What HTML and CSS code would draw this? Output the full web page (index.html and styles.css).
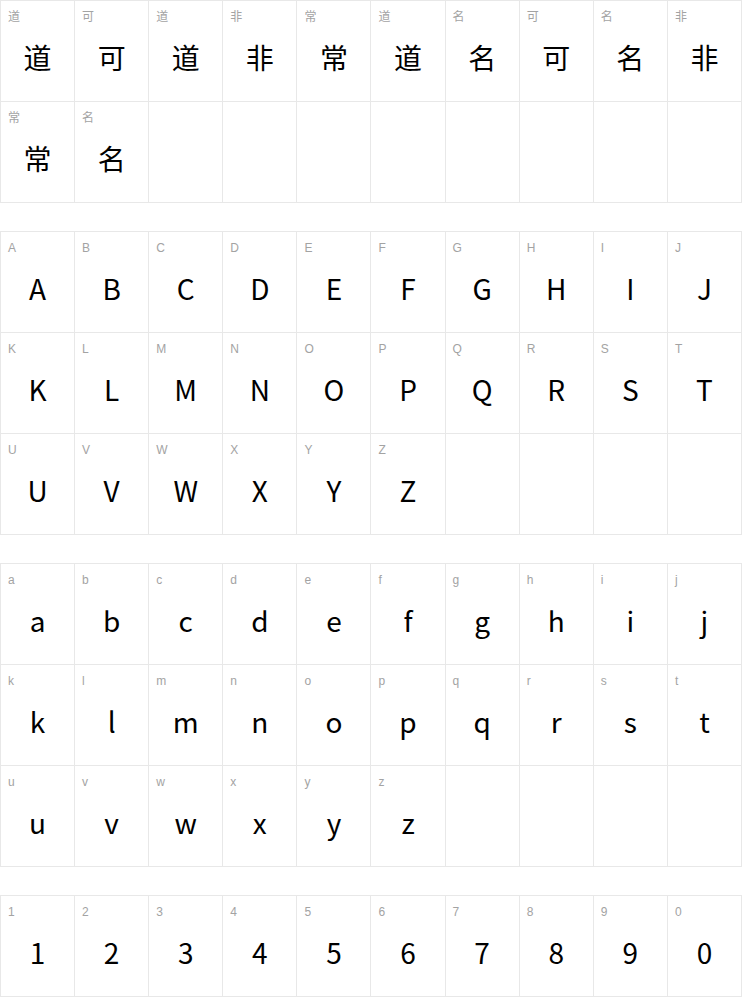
FILE: index.html
```html
<!DOCTYPE html>
<html lang="zh">
<head>
  <meta charset="UTF-8">
  <title>字体预览</title>
  <link rel="stylesheet" href="styles.css">
</head>
<body>
  <div class="grid" id="cjk"></div>
  <div class="grid" id="upper"></div>
  <div class="grid" id="lower"></div>
  <div class="grid" id="digits"></div>

  <script>
    function fillGrid(id, chars) {
      const grid = document.getElementById(id);
      const total = Math.ceil(chars.length / 10) * 10;
      for (let i = 0; i < total; i++) {
        const cell = document.createElement("div");
        cell.className = "cell";
        if (i < chars.length) {
          cell.innerHTML = `<span class="label">${chars[i]}</span><span class="glyph">${chars[i]}</span>`;
        }
        grid.appendChild(cell);
      }
    }

    fillGrid("cjk", Array.from("道可道非常道名可名非常名"));
    fillGrid("upper", Array.from("ABCDEFGHIJKLMNOPQRSTUVWXYZ"));
    fillGrid("lower", Array.from("abcdefghijklmnopqrstuvwxyz"));
    fillGrid("digits", Array.from("1234567890"));
  </script>
</body>
</html>
```

FILE: styles.css
```css
body {
  margin: 0;
  background: #ffffff;
  font-family: "Noto Sans CJK SC", "Noto Sans", sans-serif;
}

.grid {
  display: grid;
  grid-template-columns: repeat(10, 1fr);
  border-top: 1px solid #e8e8e8;
  border-left: 1px solid #e8e8e8;
  margin-bottom: 28px;
}

.grid:last-child {
  margin-bottom: 0;
}

.cell {
  height: 100px;
  border-right: 1px solid #e8e8e8;
  border-bottom: 1px solid #e8e8e8;
  display: flex;
  flex-direction: column;
}

.label {
  font-family: "Liberation Sans", "Noto Sans CJK SC", sans-serif;
  font-size: 12px;
  line-height: 16px;
  color: #a3a3a3;
  padding: 8px 0 0 7px;
}

.glyph {
  font-size: 28px;
  line-height: 40px;
  color: #000000;
  text-align: center;
  margin-top: 12px;
}
```
